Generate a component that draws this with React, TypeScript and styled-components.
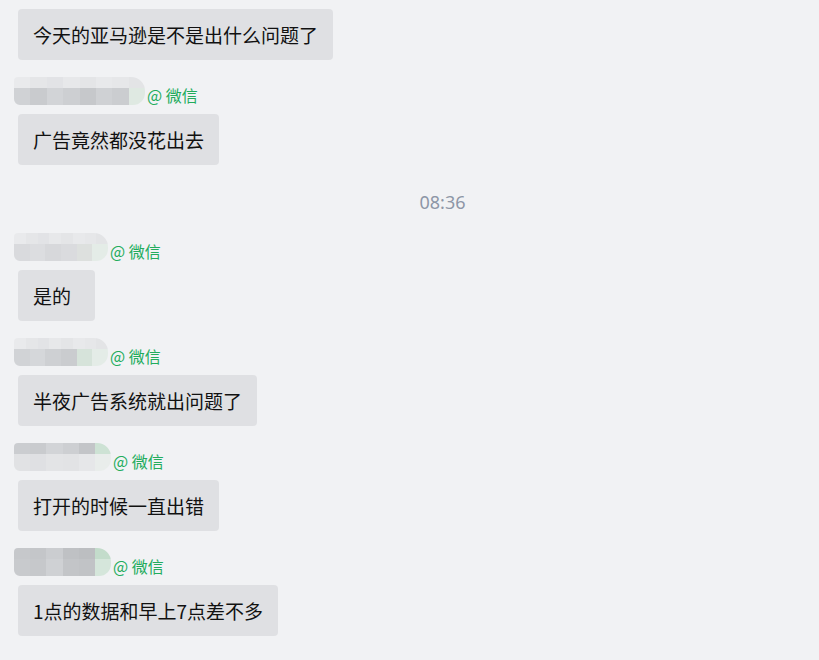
import styled, { createGlobalStyle } from "styled-components";

const GlobalStyle = createGlobalStyle`
  html, body {
    margin: 0;
    padding: 0;
    background: #f1f2f4;
  }
  body {
    font-family: "Noto Sans CJK SC", "Noto Sans", sans-serif;
    color: #111;
  }
`;

type Entry =
  | { kind: "time"; text: string }
  | { kind: "msg"; text: string; name?: { width: number; top: string[]; bottom: string[] } };

const LIGHT = ["#e9eaec", "#e5e6e8", "#e2e3e6", "#e7e8ea", "#e4e5e7", "#e8e9eb", "#e6e7e9", "#e3e4e6"];

const entries: Entry[] = [
  { kind: "msg", text: "今天的亚马逊是不是出什么问题了" },
  {
    kind: "msg",
    text: "广告竟然都没花出去",
    name: {
      width: 131,
      top: LIGHT,
      bottom: ["#d0d2d5", "#c9cbce", "#d2d4d7", "#cdcfd2", "#c6c8cb", "#cfd1d4", "#cbcdd0", "#dfe9e2"],
    },
  },
  { kind: "time", text: "08:36" },
  {
    kind: "msg",
    text: "是的\u00a0\u00a0",
    name: {
      width: 94,
      top: LIGHT,
      bottom: ["#d9dadd", "#dcdde0", "#d7d8db", "#dadbde", "#dde0de", "#e4ece7"],
    },
  },
  {
    kind: "msg",
    text: "半夜广告系统就出问题了",
    name: {
      width: 94,
      top: LIGHT,
      bottom: ["#d1d3d6", "#d5d7da", "#ced0d3", "#cacccf", "#d6e3da", "#e4ece7"],
    },
  },
  {
    kind: "msg",
    text: "打开的时候一直出错",
    name: {
      width: 97,
      top: ["#cbcdd0", "#c9cbce", "#d2d4d7", "#cdcfd2", "#c3c5c8", "#cde2d4"],
      bottom: ["#e1e2e4", "#dfe0e3", "#e3e4e6", "#e2e3e5", "#e6e7e9", "#e9edeb"],
    },
  },
  {
    kind: "msg",
    text: "1点的数据和早上7点差不多",
    name: {
      width: 97,
      top: ["#c6c8cb", "#c4c6c9", "#cbcdd0", "#bfc1c4", "#bcbec1", "#c3dccb"],
      bottom: ["#c8cacd", "#c6c8cb", "#cfd1d4", "#c3c5c8", "#c1c3c6", "#d5e6db"],
    },
  },
];

export default function App() {
  return (
    <>
      <GlobalStyle />
      <Chat>
        {entries.map((e, i) =>
          e.kind === "time" ? (
            <TimeRow key={i}>{e.text}</TimeRow>
          ) : (
            <Message key={i}>
              {e.name && (
                <NameRow>
                  <Mosaic style={{ width: e.name.width }}>
                    <MosaicRow>
                      {e.name.top.map((c, j) => (
                        <Tile key={j} $color={c} />
                      ))}
                    </MosaicRow>
                    <MosaicRow $tall>
                      {e.name.bottom.map((c, j) => (
                        <Tile key={j} $color={c} />
                      ))}
                    </MosaicRow>
                  </Mosaic>
                  <Source>@ 微信</Source>
                </NameRow>
              )}
              <Bubble>{e.text}</Bubble>
            </Message>
          )
        )}
      </Chat>
    </>
  );
}

const Chat = styled.div`
  display: flex;
  flex-direction: column;
  align-items: flex-start;
  padding: 9px 18px 24px;
  gap: 25px;
`;

const Message = styled.div`
  display: flex;
  flex-direction: column;
  align-items: flex-start;
  gap: 9px;
`;

const NameRow = styled.div`
  display: flex;
  align-items: flex-end;
  height: 20px;
  margin-left: -4px;
  gap: 2px;
`;

const Mosaic = styled.div`
  height: 28px;
  display: flex;
  flex-direction: column;
  border-radius: 4px 14px 12px 6px;
  overflow: hidden;
  filter: blur(0.6px);
`;

const MosaicRow = styled.div<{ $tall?: boolean }>`
  display: flex;
  height: ${(p) => (p.$tall ? "17px" : "11px")};
`;

const Tile = styled.div<{ $color: string }>`
  flex: 1;
  background: ${(p) => p.$color};
`;

const Source = styled.span`
  font-size: 16px;
  line-height: 20px;
  color: #22ac5c;
  white-space: nowrap;
`;

const Bubble = styled.div`
  background: #dfe0e3;
  border-radius: 4px;
  padding: 12px 15px;
  font-size: 19px;
  line-height: 27px;
  color: #111;
  white-space: pre;
`;

const TimeRow = styled.div`
  align-self: stretch;
  display: flex;
  justify-content: center;
  padding-left: 66px;
  margin: 0 0 2px;
  font-family: "Noto Sans", "Open Sans", sans-serif;
  font-size: 18px;
  line-height: 24px;
  color: #8d96a6;
`;
